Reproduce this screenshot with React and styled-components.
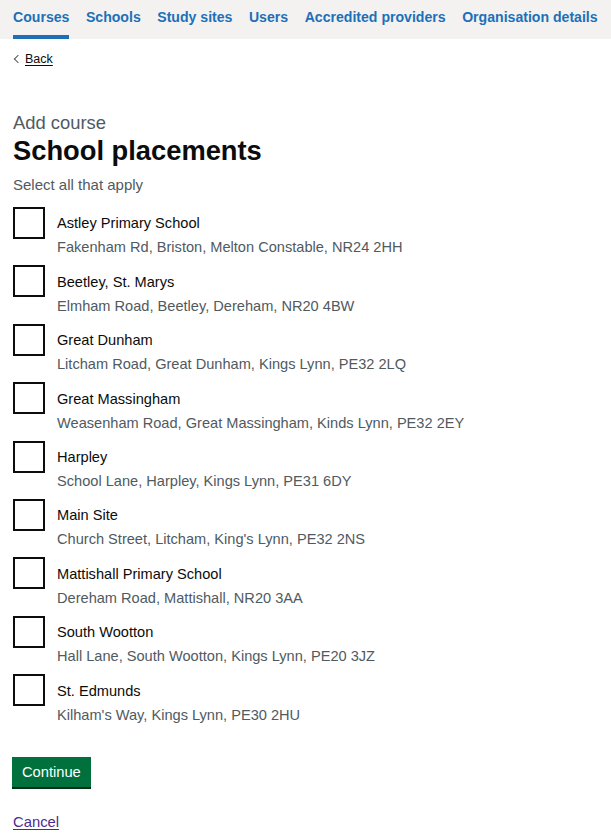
import React from "react";
import styled, { createGlobalStyle } from "styled-components";

const GlobalStyle = createGlobalStyle`
  body {
    margin: 0;
    background: #fff;
    font-family: "Liberation Sans", Arial, sans-serif;
    color: #0b0c0c;
  }
`;

const NavBar = styled.nav`
  background: #f3f2f1;
  height: 39px;
  padding: 0 13px;
  display: flex;
  gap: 16.5px;
  box-sizing: border-box;
  overflow: hidden;
`;

const NavItem = styled.a`
  display: block;
  padding-top: 7px;
  height: 39px;
  box-sizing: border-box;
  font-size: 14.1px;
  line-height: 20px;
  font-weight: 700;
  color: #1d70b8;
  text-decoration: none;
  white-space: nowrap;
  border-bottom: 4px solid ${({ active }) => (active ? "#1d70b8" : "transparent")};
`;

const Main = styled.main`
  padding: 0 13px;
`;

const BackRow = styled.div`
  padding-top: 12px;
  height: 16px;
  display: flex;
  align-items: center;
`;

const BackLink = styled.a`
  position: relative;
  padding-left: 12px;
  font-size: 12.5px;
  line-height: 16px;
  color: #0b0c0c;
  text-decoration: underline;
  text-underline-offset: 2px;

  &::before {
    content: "";
    position: absolute;
    left: 2px;
    top: 5px;
    width: 5px;
    height: 5px;
    border-left: 1px solid #505a5f;
    border-bottom: 1px solid #505a5f;
    transform: rotate(45deg);
  }
`;

const Form = styled.form`
  padding-top: 44px;
`;

const Caption = styled.span`
  display: block;
  font-size: 18.4px;
  line-height: 24px;
  color: #505a5f;
`;

const Heading = styled.h1`
  margin: 0 0 8px;
  font-size: 27.3px;
  line-height: 32px;
  font-weight: 700;
`;

const Hint = styled.div`
  font-size: 15px;
  line-height: 20px;
  color: #505a5f;
  margin-bottom: 12px;
`;

const CheckList = styled.div`
  margin-bottom: 32px;
`;

const CheckItem = styled.label`
  display: flex;
  margin-bottom: 8px;
  cursor: pointer;
`;

const Box = styled.span`
  flex-shrink: 0;
  width: 32px;
  height: 32px;
  border: 2px solid #0b0c0c;
  box-sizing: border-box;
  background: #fff;
`;

const ItemText = styled.span`
  display: flex;
  flex-direction: column;
  padding-left: 12px;
`;

const ItemLabel = styled.span`
  padding: 6.4px 0 4px;
  font-size: 14.6px;
  line-height: 20px;
  color: #0b0c0c;
`;

const ItemHint = styled.span`
  font-size: 14.6px;
  line-height: 20px;
  color: #505a5f;
`;

const Button = styled.button`
  display: block;
  height: 30px;
  padding: 0 10px;
  margin: 0 0 25px -1px;
  border: 0;
  border-radius: 0;
  background: #00703c;
  box-shadow: 0 2px 0 #002d18;
  color: #fff;
  font-family: inherit;
  font-size: 14.7px;
  line-height: 18px;
  cursor: pointer;
`;

const CancelLink = styled.a`
  display: inline-block;
  font-size: 14.8px;
  line-height: 20px;
  color: #4c2c92;
  text-decoration: underline;
  text-underline-offset: 2px;
`;

const navItems = ["Courses", "Schools", "Study sites", "Users", "Accredited providers", "Organisation details"];

const schools = [
  { name: "Astley Primary School", address: "Fakenham Rd, Briston, Melton Constable, NR24 2HH" },
  { name: "Beetley, St. Marys", address: "Elmham Road, Beetley, Dereham, NR20 4BW" },
  { name: "Great Dunham", address: "Litcham Road, Great Dunham, Kings Lynn, PE32 2LQ" },
  { name: "Great Massingham", address: "Weasenham Road, Great Massingham, Kinds Lynn, PE32 2EY" },
  { name: "Harpley", address: "School Lane, Harpley, Kings Lynn, PE31 6DY" },
  { name: "Main Site", address: "Church Street, Litcham, King's Lynn, PE32 2NS" },
  { name: "Mattishall Primary School", address: "Dereham Road, Mattishall, NR20 3AA" },
  { name: "South Wootton", address: "Hall Lane, South Wootton, Kings Lynn, PE20 3JZ" },
  { name: "St. Edmunds", address: "Kilham's Way, Kings Lynn, PE30 2HU" },
];

export default function App() {
  return (
    <>
      <GlobalStyle />
      <NavBar>
        {navItems.map(item => (
          <NavItem key={item} href="#" active={item === "Courses" ? 1 : 0}>
            {item}
          </NavItem>
        ))}
      </NavBar>
      <Main>
        <BackRow>
          <BackLink href="#">Back</BackLink>
        </BackRow>
        <Form onSubmit={e => e.preventDefault()}>
          <Caption>Add course</Caption>
          <Heading>School placements</Heading>
          <Hint>Select all that apply</Hint>
          <CheckList>
            {schools.map(s => (
              <CheckItem key={s.name}>
                <Box />
                <ItemText>
                  <ItemLabel>{s.name}</ItemLabel>
                  <ItemHint>{s.address}</ItemHint>
                </ItemText>
              </CheckItem>
            ))}
          </CheckList>
          <Button type="submit">Continue</Button>
          <CancelLink href="#">Cancel</CancelLink>
        </Form>
      </Main>
    </>
  );
}
